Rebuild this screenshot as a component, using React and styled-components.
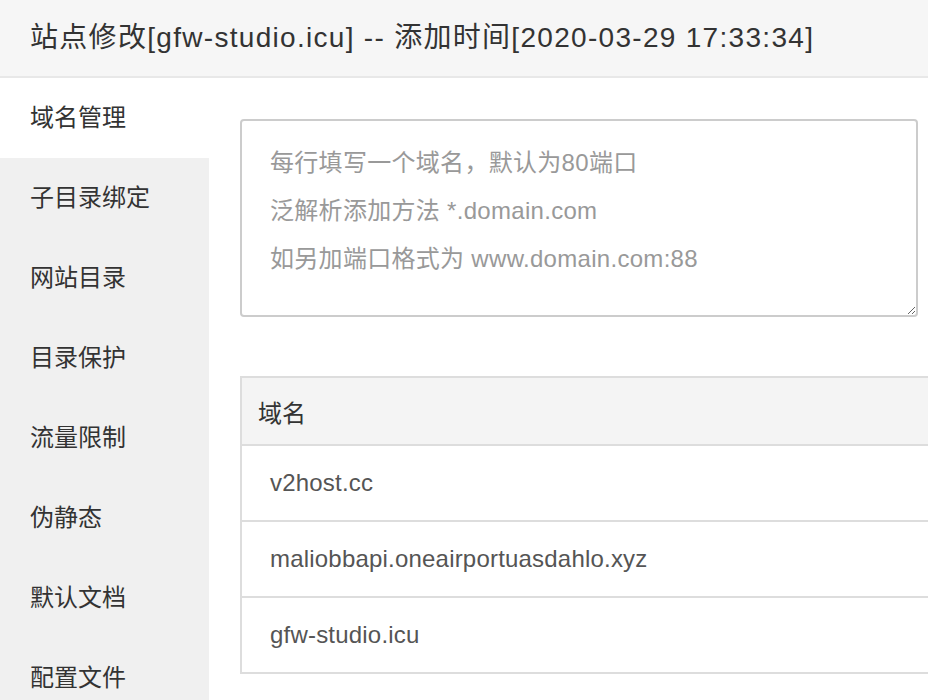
import React from 'react'
import styled, { createGlobalStyle } from 'styled-components'

const GlobalStyle = createGlobalStyle`
  html, body {
    margin: 0;
    padding: 0;
    background: #fff;
    overflow: hidden;
  }
  body {
    font-family: "Liberation Sans", "Noto Sans CJK SC", sans-serif;
    color: #333;
  }
`

const menuItems = ['域名管理', '子目录绑定', '网站目录', '目录保护', '流量限制', '伪静态', '默认文档', '配置文件']

const domains = ['v2host.cc', 'maliobbapi.oneairportuasdahlo.xyz', 'gfw-studio.icu']

const App = () => {
    return (
        <Page>
            <GlobalStyle />
            <Header>站点修改[gfw-studio.icu] -- 添加时间[2020-03-29 17:33:34]</Header>
            <Body>
                <Sidebar>
                    {menuItems.map((item, index) => (
                        <MenuItem key={item} active={index === 0}>{item}</MenuItem>
                    ))}
                </Sidebar>
                <Content>
                    <DomainInput
                        placeholder={'每行填写一个域名，默认为80端口\n泛解析添加方法 *.domain.com\n如另加端口格式为 www.domain.com:88'}
                    />
                    <Table>
                        <thead>
                            <tr>
                                <HeadCell>域名</HeadCell>
                            </tr>
                        </thead>
                        <tbody>
                            {domains.map((d) => (
                                <tr key={d}>
                                    <Cell>{d}</Cell>
                                </tr>
                            ))}
                        </tbody>
                    </Table>
                </Content>
            </Body>
        </Page>
    )
}

export default App

const Page = styled.div`
    width: 928px;
    height: 700px;
    overflow: hidden;
`

const Header = styled.div`
    height: 76px;
    line-height: 76px;
    padding-left: 30px;
    background: #f6f6f6;
    border-bottom: 2px solid #e8e8e8;
    font-size: 28px;
    letter-spacing: 1.3px;
    color: #333;
    white-space: nowrap;
`

const Body = styled.div`
    display: flex;
    height: 622px;
`

const Sidebar = styled.div`
    width: 209px;
    flex-shrink: 0;
    background: #f0f0f0;
`

const MenuItem = styled.div`
    height: 80px;
    line-height: 80px;
    padding-left: 30px;
    font-size: 24px;
    color: #333;
    background: ${(p) => (p.active ? '#fff' : 'transparent')};
`

const Content = styled.div`
    flex: 1;
    padding: 41px 0 0 31px;
    display: flex;
    flex-direction: column;
    min-width: 0;
`

const DomainInput = styled.textarea`
    box-sizing: border-box;
    width: 678px;
    height: 198px;
    flex-shrink: 0;
    border: 2px solid #ccc;
    border-radius: 4px;
    padding: 18px 28px;
    font-family: "Liberation Sans", "Noto Sans CJK SC", sans-serif;
    font-size: 24px;
    line-height: 48px;
    letter-spacing: 0.3px;
    color: #555;
    outline: none;

    &::placeholder {
        color: #999;
    }
`

const Table = styled.table`
    margin-top: 59px;
    width: 740px;
    flex-shrink: 0;
    border-collapse: collapse;
    border: 2px solid #ddd;
`

const HeadCell = styled.th`
    height: 66px;
    padding: 0 16px;
    text-align: left;
    font-weight: normal;
    font-size: 24px;
    color: #333;
    background: #f4f4f4;
    border-bottom: 2px solid #ddd;
`

const Cell = styled.td`
    height: 74px;
    padding: 0 28px;
    font-size: 24px;
    letter-spacing: 0.2px;
    color: #555;
    border-bottom: 2px solid #ddd;
`
